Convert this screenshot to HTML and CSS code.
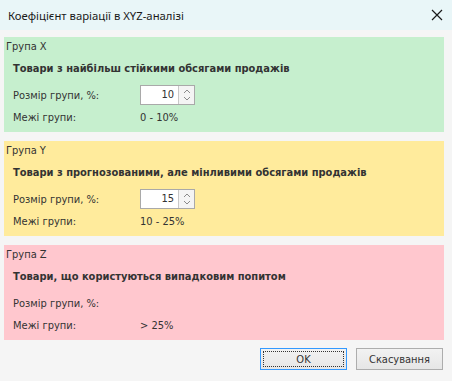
FILE: index.html
```html
<!DOCTYPE html>
<html lang="uk">
<head>
    <meta charset="UTF-8">
    <title>Коефіцієнт варіації в XYZ-аналізі</title>
    <link rel="stylesheet" href="styles.css">
</head>
<body>

<div class="window">
    <header class="titlebar">
        <span class="title">Коефіцієнт варіації в XYZ-аналізі</span>
        <svg class="close" width="12" height="12" viewBox="0 0 12 12">
            <path d="M1 1 L11 11 M11 1 L1 11" stroke="#1a1a1a" stroke-width="1.2" fill="none"/>
        </svg>
    </header>

    <div class="content">
        <section class="group group-x">
            <div class="group-caption">Група X</div>
            <div class="group-title">Товари з найбільш стійкими обсягами продажів</div>
            <div class="row row-size">
                <span class="row-label">Розмір групи, %:</span>
                <div class="spin">
                    <span class="spin-value">10</span>
                    <span class="spin-buttons">
                        <svg width="8" height="5" viewBox="0 0 8 5"><path d="M1 4 L4 1 L7 4" stroke="#8a8a8a" fill="none"/></svg>
                        <svg width="8" height="5" viewBox="0 0 8 5"><path d="M1 1 L4 4 L7 1" stroke="#8a8a8a" fill="none"/></svg>
                    </span>
                </div>
            </div>
            <div class="row">
                <span class="row-label">Межі групи:</span>
                <span class="row-value">0 - 10%</span>
            </div>
        </section>

        <section class="group group-y">
            <div class="group-caption">Група Y</div>
            <div class="group-title">Товари з прогнозованими, але мінливими обсягами продажів</div>
            <div class="row row-size">
                <span class="row-label">Розмір групи, %:</span>
                <div class="spin">
                    <span class="spin-value">15</span>
                    <span class="spin-buttons">
                        <svg width="8" height="5" viewBox="0 0 8 5"><path d="M1 4 L4 1 L7 4" stroke="#8a8a8a" fill="none"/></svg>
                        <svg width="8" height="5" viewBox="0 0 8 5"><path d="M1 1 L4 4 L7 1" stroke="#8a8a8a" fill="none"/></svg>
                    </span>
                </div>
            </div>
            <div class="row">
                <span class="row-label">Межі групи:</span>
                <span class="row-value">10 - 25%</span>
            </div>
        </section>

        <section class="group group-z">
            <div class="group-caption">Група Z</div>
            <div class="group-title">Товари, що користуються випадковим попитом</div>
            <div class="row row-size">
                <span class="row-label">Розмір групи, %:</span>
            </div>
            <div class="row">
                <span class="row-label">Межі групи:</span>
                <span class="row-value">&gt; 25%</span>
            </div>
        </section>
    </div>

    <footer class="buttons">
        <button class="btn btn-default"><span class="focus">OK</span></button>
        <button class="btn">Скасування</button>
    </footer>
</div>

</body>
</html>
```
FILE: styles.css
```css
html, body {
    margin: 0;
    padding: 0;
}
body {
    font-family: "DejaVu Sans Condensed", "DejaVu Sans", sans-serif;
    font-size: 11px;
    color: #333;
    background: #f5f5f5;
}
.window {
    display: flex;
    flex-direction: column;
    width: 452px;
    height: 381px;
    overflow: hidden;
}
.titlebar {
    display: flex;
    align-items: center;
    justify-content: space-between;
    height: 30px;
    padding: 0 9px 0 8px;
    background: #e9f6f8;
    box-sizing: border-box;
}
.title {
    font-family: "Noto Sans", "Open Sans", sans-serif;
    font-size: 11.3px;
    color: #1a1a1a;
}
.content {
    display: flex;
    flex-direction: column;
    gap: 9px;
    padding: 7px 8px 0 4px;
}
.group {
    height: 95px;
    padding-top: 1px;
    box-sizing: border-box;
}
.group-x { background: #c6efce; }
.group-y { background: #ffeb9c; }
.group-z { background: #ffc7ce; }
.group-caption {
    padding-left: 2px;
    line-height: 18px;
}
.group-title {
    margin-top: 4px;
    padding-left: 9px;
    line-height: 18px;
    font-weight: bold;
}
.row {
    display: flex;
    align-items: center;
    height: 18px;
    margin-top: 3px;
    padding-left: 9px;
}
.row-size {
    height: 20px;
    margin-top: 7px;
}
.row-label {
    width: 127px;
}
.spin {
    display: flex;
    width: 55px;
    height: 20px;
    border: 1px solid #a9a9a9;
    background: #fff;
    box-sizing: border-box;
}
.spin-value {
    flex: 1;
    text-align: right;
    padding-right: 4px;
    line-height: 18px;
}
.spin-buttons {
    display: flex;
    flex-direction: column;
    align-items: center;
    justify-content: center;
    gap: 2px;
    width: 15px;
    border-left: 1px solid #c8c8c8;
    background: #f4f4f4;
}
.spin-buttons svg {
    display: block;
}
.buttons {
    display: flex;
    justify-content: flex-end;
    gap: 9px;
    padding: 8px 9px 0 0;
}
.btn {
    width: 87px;
    height: 22px;
    padding: 0;
    font-family: "DejaVu Sans Condensed", "DejaVu Sans", sans-serif;
    font-size: 11px;
    color: #333;
    background: linear-gradient(#f2f2f2, #e6e6e6);
    border: 1px solid #adadad;
    border-radius: 0;
}
.btn-default {
    border-color: #3399ff;
    padding: 2px;
}
.focus {
    display: flex;
    align-items: center;
    justify-content: center;
    height: 100%;
    border: 1px dotted #333;
    box-sizing: border-box;
}
```
